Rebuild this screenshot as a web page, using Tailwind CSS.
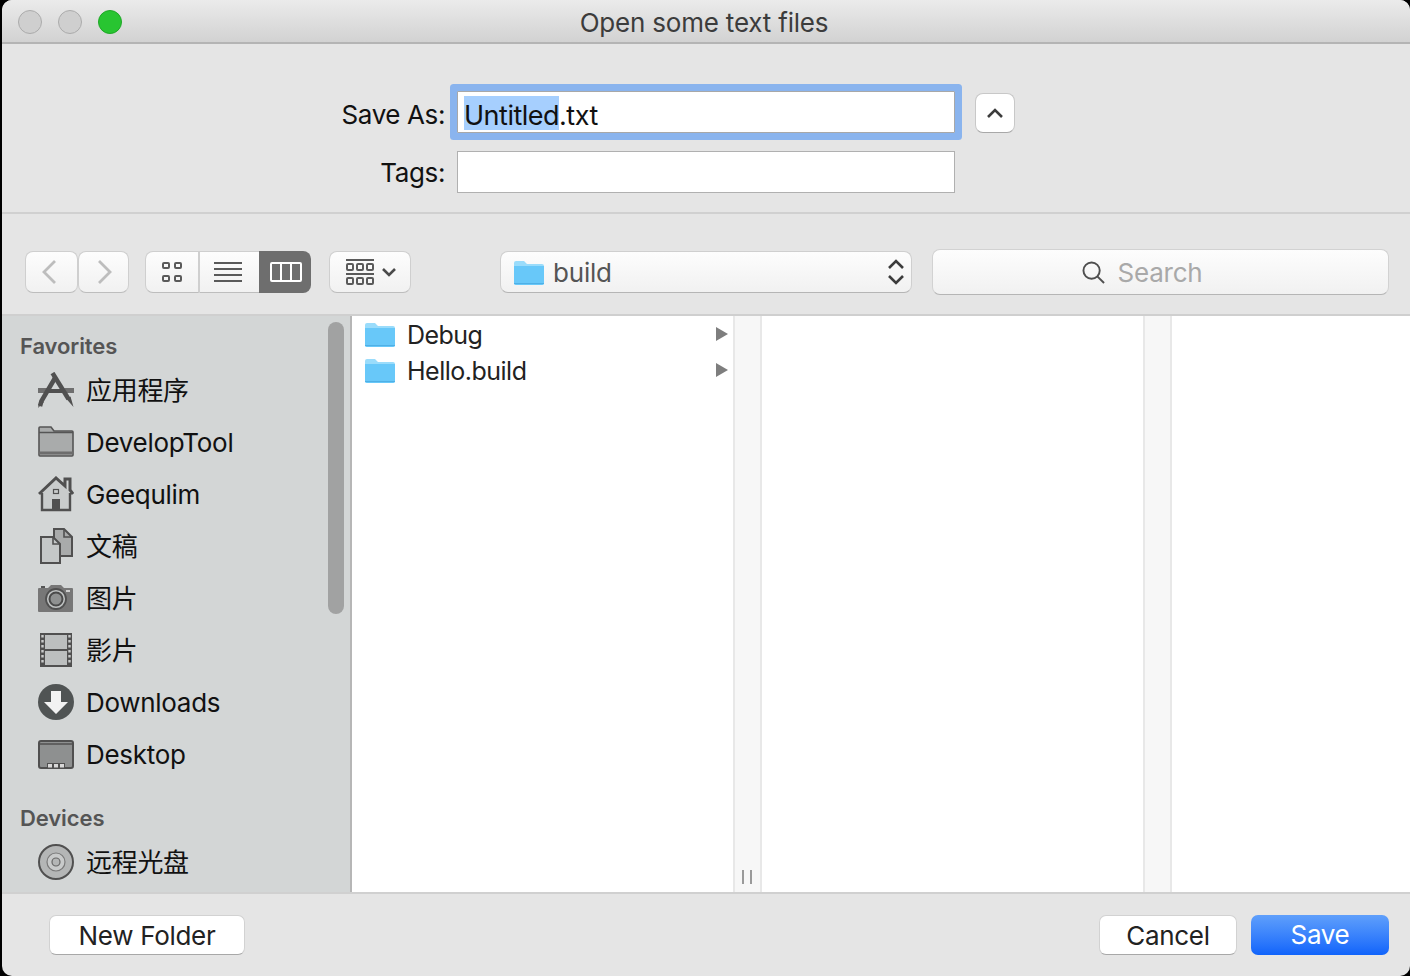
<!DOCTYPE html>
<html lang="en">
<head>
    <meta charset="UTF-8">
    <title>Open some text files</title>
    <script src="https://cdn.jsdelivr.net/npm/@tailwindcss/browser@4"></script>
</head>
<body class="bg-black h-[976px] overflow-hidden font-[Inter,'Noto_Sans_CJK_SC',sans-serif]">
<div class="ml-[2px] h-[976px] rounded-t-[10px] rounded-b-[10px] overflow-hidden bg-[#e5e5e5] flex flex-col">

    <!-- title bar -->
    <div class="relative h-[44px] shrink-0 bg-gradient-to-b from-[#ebebeb] to-[#d2d2d2] border-b-2 border-[#b4b4b4] flex items-center justify-center">
        <div class="absolute left-[16px] top-[10px] flex gap-[16px]">
            <div class="w-[24px] h-[24px] rounded-full bg-[#cfcfcf] border border-[#ababab]"></div>
            <div class="w-[24px] h-[24px] rounded-full bg-[#cfcfcf] border border-[#ababab]"></div>
            <div class="w-[24px] h-[24px] rounded-full bg-[#28c531] border border-[#1fa727]"></div>
        </div>
        <span class="text-[26px] text-[#3c3c3c] pr-[4px] pt-[3px] tracking-[-0.2px]">Open some text files</span>
    </div>

    <!-- name and tags -->
    <div class="h-[170px] shrink-0 border-b-2 border-[#d0d0d0] pt-[47px] flex flex-col gap-[18px]">
        <div class="flex items-center h-[42px]">
            <label class="w-[443px] text-right text-[26px] text-[#111] tracking-[-0.4px] pt-[4px]">Save As:</label>
            <div class="ml-[12px] w-[498px] h-[42px] bg-white border border-[#a8a8a8] rounded-[1px] shadow-[0_0_0_7px_#8ab4ee] flex items-center pl-[6px] text-[27px] text-[#111] tracking-[-0.5px]">
                <span class="bg-[#a6cffe] h-[34px] leading-[39px] mt-[1px]">Untitled</span><span class="h-[34px] leading-[39px] mt-[1px]">.txt</span>
            </div>
            <button class="ml-[20px] w-[40px] h-[40px] bg-white rounded-lg border border-[#c8c8c8] border-b-[#a8a8a8] flex items-center justify-center mt-[2px]">
                <svg width="18" height="12" viewBox="0 0 18 12" fill="none" stroke="#3c3c3c" stroke-width="2.6"><path d="M2 10l7-7 7 7"/></svg>
            </button>
        </div>
        <div class="flex items-center h-[42px]">
            <label class="w-[443px] text-right text-[26px] text-[#111] tracking-[-0.4px]">Tags:</label>
            <div class="ml-[12px] w-[498px] h-[42px] bg-white border border-[#b0b0b0]"></div>
        </div>
    </div>

    <!-- toolbar -->
    <div class="h-[102px] shrink-0 border-b-2 border-[#cfcfcf] flex items-start pt-[35px] pl-[23px]">
        <div class="flex mt-[2px]">
            <button class="w-[53px] h-[42px] pr-[6px] rounded-lg border border-[#cfcfcf] border-b-[#bdbdbd] bg-gradient-to-b from-[#fdfdfd] to-[#f1f1f1] flex items-center justify-center">
                <svg width="18" height="26" viewBox="0 0 18 26" fill="none" stroke="#bdbdbd" stroke-width="2.8"><path d="M15 2L4 13l11 11"/></svg>
            </button>
            <button class="w-[51px] h-[42px] pl-[3px] rounded-lg border border-[#cfcfcf] border-b-[#bdbdbd] bg-gradient-to-b from-[#fdfdfd] to-[#f1f1f1] flex items-center justify-center">
                <svg width="18" height="26" viewBox="0 0 18 26" fill="none" stroke="#bdbdbd" stroke-width="2.8"><path d="M3 2l11 11L3 24"/></svg>
            </button>
        </div>
        <div class="flex mt-[2px] ml-[16px] h-[42px]">
            <button class="w-[55px] rounded-l-lg border border-r-2 border-[#cfcfcf] border-b-[#bdbdbd] bg-gradient-to-b from-[#fdfdfd] to-[#f1f1f1] flex items-center justify-center">
                <svg width="20" height="20" viewBox="0 0 20 20" fill="none" stroke="#5a5a5a" stroke-width="2"><rect x="1" y="1" width="6" height="5" rx="1"/><rect x="13" y="1" width="6" height="5" rx="1"/><rect x="1" y="14" width="6" height="5" rx="1"/><rect x="13" y="14" width="6" height="5" rx="1"/></svg>
            </button>
            <button class="w-[59px] pr-[4px] border-y border-[#cfcfcf] border-b-[#bdbdbd] bg-gradient-to-b from-[#fdfdfd] to-[#f1f1f1] flex items-center justify-center">
                <svg width="28" height="20" viewBox="0 0 28 20" stroke="#5a5a5a" stroke-width="2"><path d="M0 1h28M0 7h28M0 13h28M0 19h28"/></svg>
            </button>
            <button class="w-[52px] pl-[2px] rounded-r-lg bg-[#6e6e6e] flex items-center justify-center">
                <svg width="32" height="20" viewBox="0 0 32 20" fill="none" stroke="#fff" stroke-width="2"><rect x="1" y="1" width="30" height="18" rx="1"/><path d="M11 1v18M21 1v18"/></svg>
            </button>
        </div>
        <button class="mt-[2px] ml-[18px] w-[82px] h-[42px] pl-[2px] rounded-lg border border-[#cfcfcf] border-b-[#bdbdbd] bg-gradient-to-b from-[#fdfdfd] to-[#f1f1f1] flex items-center justify-center gap-[8px]">
            <svg width="28" height="27" viewBox="0 0 28 27" fill="none" stroke="#5a5a5a" stroke-width="2"><path d="M0 1h28M0 15h28"/><rect x="1" y="5" width="6" height="6" rx="1"/><rect x="11" y="5" width="6" height="6" rx="1"/><rect x="21" y="5" width="6" height="6" rx="1"/><rect x="1" y="19" width="6" height="6" rx="1"/><rect x="11" y="19" width="6" height="6" rx="1"/><rect x="21" y="19" width="6" height="6" rx="1"/></svg>
            <svg width="14" height="10" viewBox="0 0 14 10" fill="none" stroke="#4a4a4a" stroke-width="2.6"><path d="M1 2l6 6 6-6"/></svg>
        </button>
        <div class="mt-[2px] ml-[89px] w-[412px] h-[42px] rounded-lg border border-[#cfcfcf] border-b-[#b5b5b5] bg-gradient-to-b from-[#fdfdfd] to-[#f1f1f1] flex items-center pl-[13px] pr-[6px]">
            <svg width="30" height="25" viewBox="0 0 30 25" class="shrink-0"><path d="M2 1h8l3 3h15a2 2 0 0 1 2 2v17a2 2 0 0 1-2 2H2a2 2 0 0 1-2-2V3a2 2 0 0 1 2-2z" fill="#9adcfb"/><path d="M0 6h30v17a2 2 0 0 1-2 2H2a2 2 0 0 1-2-2z" fill="#68c8f9"/><path d="M0 23.500h30" stroke="#4fb0e6"/></svg>
            <span class="ml-[9px] text-[26px] text-[#555] tracking-[-0.2px] flex-1">build</span>
            <svg width="18" height="28" viewBox="0 0 18 28" fill="none" stroke="#3c3c3c" stroke-width="2.6"><path d="M2 10l7-7 7 7M2 18l7 7 7-7"/></svg>
        </div>
        <div class="ml-[20px] w-[457px] h-[46px] pr-[36px] rounded-lg border border-[#d2d2d2] border-b-[#b5b5b5] bg-gradient-to-b from-[#fdfdfd] to-[#f1f1f1] flex items-center justify-center gap-[12px]">
            <svg width="23" height="23" viewBox="0 0 24 24" fill="none" stroke="#4f4f4f" stroke-width="2"><circle cx="10" cy="10" r="8.500"/><path d="M16 16l7 7"/></svg>
            <span class="text-[26px] text-[#a9a9a9] tracking-[-0.2px]">Search</span>
        </div>
    </div>

    <!-- browser -->
    <div class="flex-1 flex min-h-0">
        <aside class="relative w-[350px] shrink-0 bg-[#d3d6d6] border-r-2 border-[#b6b6b6] overflow-hidden pl-[18px] pt-[15px]">
            <div class="absolute left-[326px] top-[6px] w-[16px] h-[292px] rounded-full bg-[#a1a2a2]"></div>
            <h3 class="h-[30px] leading-[30px] text-[22px] font-semibold text-[#555] tracking-[-0.1px]">Favorites</h3>

            <div class="flex items-center h-[52px] pl-[18px] gap-[12px] text-[26px] text-[#111] tracking-[-0.3px] mt-[3px]">
                <svg width="36" height="36" viewBox="0 0 36 36" class="shrink-0" fill="none"><path d="M0 16h10l-2 5H0zM26 16h10v5h-8z" fill="#6f6f6f"/><path d="M10 17h16l2 4H8z" fill="#505050"/><path d="M2 34l1.500-5L17 6" stroke="#505050" stroke-width="4.500"/><path d="M14.500 1l16 26" stroke="#505050" stroke-width="4.500"/><path d="M28.500 27l4-2.500 3 10.500z" fill="#505050"/><path d="M0 36l2-8 4 2z" fill="#505050"/></svg>
                <span>应用程序</span>
            </div>
            <div class="flex items-center h-[52px] pl-[18px] gap-[12px] text-[26px] text-[#111] tracking-[-0.3px]">
                <svg width="36" height="36" viewBox="0 0 36 36" class="shrink-0"><path d="M2 3h11l3 4h18a1 1 0 0 1 1 1v23a1 1 0 0 1-1 1H2a1 1 0 0 1-1-1V4a1 1 0 0 1 1-1z" fill="#a9abab" stroke="#555" stroke-width="1.600"/><path d="M1 8.500h34" stroke="#555" stroke-width="1.300"/><path d="M1 29h34" stroke="#6d6d6d" stroke-width="3"/></svg>
                <span>DevelopTool</span>
            </div>
            <div class="flex items-center h-[52px] pl-[18px] gap-[12px] text-[26px] text-[#111] tracking-[-0.3px]">
                <svg width="36" height="36" viewBox="0 0 36 36" class="shrink-0"><path d="M4 15L18 3l14 12v19H4z" fill="#c9cccc"/><path d="M4 17v17h28V17" fill="none" stroke="#505050" stroke-width="2.400"/><path d="M1 18L18 2l9 8V3h5v11l3 4" fill="none" stroke="#505050" stroke-width="3"/><rect x="14" y="23" width="8" height="11" fill="#505050"/><rect x="15.500" y="13.500" width="5" height="4" fill="none" stroke="#505050" stroke-width="1.200"/></svg>
                <span>Geequlim</span>
            </div>
            <div class="flex items-center h-[52px] pl-[18px] gap-[12px] text-[26px] text-[#111] tracking-[-0.3px]">
                <svg width="36" height="36" viewBox="0 0 36 36" class="shrink-0"><path d="M16 1h10l8 8v19H16z" fill="#a9abab" stroke="#505050" stroke-width="2"/><path d="M26 1v8h8" fill="none" stroke="#505050" stroke-width="1.600"/><path d="M3 9h12l7 7v19H3z" fill="#c4c7c7" stroke="#505050" stroke-width="2"/><path d="M15 9v7h7" fill="none" stroke="#505050" stroke-width="1.600"/></svg>
                <span>文稿</span>
            </div>
            <div class="flex items-center h-[52px] pl-[18px] gap-[12px] text-[26px] text-[#111] tracking-[-0.3px]">
                <svg width="36" height="36" viewBox="0 0 36 36" class="shrink-0"><path d="M1 8h9l3-3h10l3 3h8a1 1 0 0 1 1 1v22a1 1 0 0 1-1 1H1a1 1 0 0 1-1-1V9a1 1 0 0 1 1-1z" fill="#777"/><path d="M3 6h4v2H3z" fill="#555"/><circle cx="18" cy="19" r="10" fill="#bfc2c2" stroke="#505050" stroke-width="1.800"/><circle cx="18" cy="19" r="6.500" fill="#8f9191" stroke="#4a4a4a" stroke-width="2"/><rect x="28" y="10" width="4" height="2" fill="#d0d0d0"/></svg>
                <span>图片</span>
            </div>
            <div class="flex items-center h-[52px] pl-[18px] gap-[12px] text-[26px] text-[#111] tracking-[-0.3px]">
                <svg width="36" height="36" viewBox="0 0 36 36" class="shrink-0"><rect x="2" y="1" width="32" height="34" fill="#505050"/><rect x="7" y="3" width="22" height="14" fill="#bcbfbf"/><rect x="7" y="19" width="22" height="14" fill="#bcbfbf"/><path d="M4.500 3v30M31.500 3v30" stroke="#c9cbcb" stroke-width="2.400" stroke-dasharray="2.500 2.500"/></svg>
                <span>影片</span>
            </div>
            <div class="flex items-center h-[52px] pl-[18px] gap-[12px] text-[26px] text-[#111] tracking-[-0.3px]">
                <svg width="36" height="36" viewBox="0 0 36 36" class="shrink-0"><circle cx="18" cy="18" r="18" fill="#505454"/><path d="M13 7h10v11h7L18 30 6 18h7z" fill="#f2f2f2"/></svg>
                <span>Downloads</span>
            </div>
            <div class="flex items-center h-[52px] pl-[18px] gap-[12px] text-[26px] text-[#111] tracking-[-0.3px]">
                <svg width="36" height="36" viewBox="0 0 36 36" class="shrink-0"><rect x="1" y="5" width="34" height="27" rx="2" fill="#8e9090" stroke="#505050" stroke-width="2"/><path d="M1 8h34" stroke="#505050" stroke-width="1.500"/><rect x="9" y="27" width="18" height="5" fill="#505050"/><rect x="10" y="28" width="4" height="3.500" fill="#d8d8d8"/><rect x="16" y="28" width="4" height="3.500" fill="#d8d8d8"/><rect x="22" y="28" width="4" height="3.500" fill="#d8d8d8"/></svg>
                <span>Desktop</span>
            </div>

            <h3 class="mt-[23px] h-[30px] leading-[30px] text-[22px] font-semibold text-[#555] tracking-[-0.1px]">Devices</h3>
            <div class="flex items-center h-[52px] mt-[3px] pl-[18px] gap-[12px] text-[26px] text-[#111] tracking-[-0.3px]">
                <svg width="36" height="36" viewBox="0 0 36 36" class="shrink-0"><circle cx="18" cy="18" r="17" fill="#b4b6b6" stroke="#505050" stroke-width="2"/><circle cx="18" cy="18" r="9" fill="#c8caca" stroke="#7a7a7a" stroke-width="1.200"/><circle cx="18" cy="18" r="4" fill="#b4b6b6" stroke="#666" stroke-width="1.200"/></svg>
                <span>远程光盘</span>
            </div>
        </aside>

        <!-- first column -->
        <div class="w-[381px] shrink-0 bg-white pt-[1px]">
            <div class="flex items-center h-[36px] pl-[13px] pr-[5px] gap-[12px]">
                <svg width="30" height="25" viewBox="0 0 30 25" class="shrink-0 -mt-[1px]"><path d="M2 1h8l3 3h15a2 2 0 0 1 2 2v17a2 2 0 0 1-2 2H2a2 2 0 0 1-2-2V3a2 2 0 0 1 2-2z" fill="#9adcfb"/><path d="M0 6h30v17a2 2 0 0 1-2 2H2a2 2 0 0 1-2-2z" fill="#68c8f9"/><path d="M0 23.500h30" stroke="#4fb0e6"/></svg>
                <span class="flex-1 text-[25px] pt-[2px] text-[#222] tracking-[-0.55px]">Debug</span>
                <svg width="12" height="14" viewBox="0 0 12 14" class="-mt-[3px]"><path d="M0 0l12 7-12 7z" fill="#7e7e7e"/></svg>
            </div>
            <div class="flex items-center h-[36px] pl-[13px] pr-[5px] gap-[12px]">
                <svg width="30" height="25" viewBox="0 0 30 25" class="shrink-0 -mt-[1px]"><path d="M2 1h8l3 3h15a2 2 0 0 1 2 2v17a2 2 0 0 1-2 2H2a2 2 0 0 1-2-2V3a2 2 0 0 1 2-2z" fill="#9adcfb"/><path d="M0 6h30v17a2 2 0 0 1-2 2H2a2 2 0 0 1-2-2z" fill="#68c8f9"/><path d="M0 23.500h30" stroke="#4fb0e6"/></svg>
                <span class="flex-1 text-[25px] pt-[2px] text-[#222] tracking-[-0.5px]">Hello.build</span>
                <svg width="12" height="14" viewBox="0 0 12 14" class="-mt-[3px]"><path d="M0 0l12 7-12 7z" fill="#7e7e7e"/></svg>
            </div>
        </div>
        <div class="relative w-[29px] shrink-0 bg-[#f7f7f7] border-x-2 border-[#e8e8e8]">
            <div class="absolute left-[7px] bottom-[8px] w-[10px] h-[14px] border-x-2 border-[#9a9a9a]"></div>
        </div>
        <div class="w-[381px] shrink-0 bg-white"></div>
        <div class="w-[29px] shrink-0 bg-[#f7f7f7] border-x-2 border-[#e8e8e8]"></div>
        <div class="flex-1 bg-white"></div>
    </div>

    <!-- footer -->
    <div class="h-[84px] shrink-0 border-t-2 border-[#d0d0d0] flex items-start pt-[21px] pl-[47px] pr-[21px] text-[26px] tracking-[-0.3px]">
        <button class="w-[196px] h-[40px] pb-[2px] bg-white rounded-[7px] border border-[#d2d2d2] border-b-[#a8a8a8] text-[#222]">New Folder</button>
        <button class="ml-auto w-[138px] h-[40px] pb-[2px] bg-white rounded-[7px] border border-[#d2d2d2] border-b-[#a8a8a8] text-[#222]">Cancel</button>
        <button class="ml-[14px] w-[138px] h-[40px] pb-[2px] rounded-[7px] bg-gradient-to-b from-[#5f9ffb] to-[#0f63fb] text-white">Save</button>
    </div>
</div>
</body>
</html>
